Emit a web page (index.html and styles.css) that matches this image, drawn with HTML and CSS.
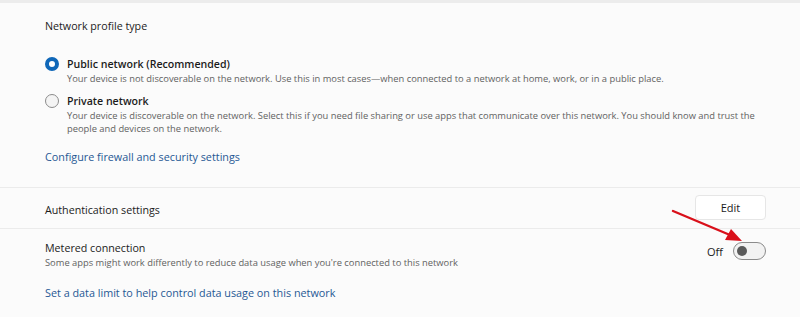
FILE: index.html
```html
<!DOCTYPE html>
<html>
<head>
<meta charset="utf-8" />
<title>Network properties</title>
<link rel="stylesheet" href="styles.css">
</head>
<body>

<div class="page">

	<div class="section profile">
		<div class="heading">Network profile type</div>

		<div class="option first">
			<span class="radio checked"></span>
			<div class="option-text">
				<div class="title">Public network (Recommended)</div>
				<div class="desc">Your device is not discoverable on the network. Use this in most cases—when connected to a network at home, work, or in a public place.</div>
			</div>
		</div>

		<div class="option">
			<span class="radio"></span>
			<div class="option-text">
				<div class="title">Private network</div>
				<div class="desc">Your device is discoverable on the network. Select this if you need file sharing or use apps that communicate over this network. You should know and trust the people and devices on the network.</div>
			</div>
		</div>

		<a class="link firewall" href="#">Configure firewall and security settings</a>
	</div>

	<div class="row auth">
		<div class="heading">Authentication settings</div>
		<button class="btn" type="button">Edit</button>
	</div>

	<div class="section metered">
		<div class="row-plain">
			<div>
				<div class="heading small">Metered connection</div>
				<div class="desc">Some apps might work differently to reduce data usage when you're connected to this network</div>
			</div>
			<div class="toggle-wrap">
				<span class="toggle-label">Off</span>
				<span class="toggle"><span class="knob"></span></span>
			</div>
		</div>
		<a class="link limit" href="#">Set a data limit to help control data usage on this network</a>
	</div>

	<svg class="arrow" width="90" height="50" viewBox="0 0 90 50">
		<line x1="3" y1="3" x2="60" y2="27" stroke="#d9101a" stroke-width="2.4" stroke-linecap="round" />
		<polygon points="72,33 55,32 61,21" fill="#d9101a" />
	</svg>

</div>

</body>
</html>
```

FILE: styles.css
```css
html, body {
	margin: 0;
	padding: 0;
}

body {
	background: #fbfbfb;
	font-family: "Open Sans", "Noto Sans", sans-serif;
	color: #1b1b1b;
}

.page {
	position: relative;
	border-top: 3px solid #ececec;
	height: 314px;
}

.section {
	padding: 0 34px 0 45px;
}

.profile {
	padding-top: 14px;
	padding-bottom: 21px;
	border-bottom: 1px solid #ebebeb;
}

.heading {
	font-size: 10.7px;
	line-height: 18px;
}

.heading.small {
	line-height: 16px;
}

.option {
	display: flex;
	gap: 8px;
	margin-top: 8px;
}

.option.first {
	margin-top: 21px;
}

.radio {
	box-sizing: border-box;
	width: 14px;
	height: 14px;
	margin-top: 1px;
	border-radius: 50%;
	border: 1px solid #8b8b8b;
	background: #f4f4f4;
	flex: none;
}

.radio.checked {
	border: 4px solid #0f67b8;
	background: #ffffff;
}

.title {
	font-size: 10.6px;
	font-weight: 600;
	line-height: 16px;
}

.desc {
	font-size: 9.35px;
	line-height: 13px;
	color: #626262;
}

.link {
	display: block;
	color: #1f5894;
	text-decoration: none;
	font-size: 10.8px;
	line-height: 18px;
}

.firewall {
	margin-top: 13px;
}

.row {
	display: flex;
	align-items: center;
	justify-content: space-between;
	height: 36px;
	padding: 4px 34px 0 45px;
	border-bottom: 1px solid #ebebeb;
}

.btn {
	width: 71px;
	height: 25px;
	margin-top: -5px;
	background: #ffffff;
	border: 1px solid #e6e6e6;
	border-radius: 4px;
	font-family: inherit;
	font-size: 11px;
	color: #1b1b1b;
}

.metered {
	padding-top: 11px;
}

.row-plain {
	display: flex;
	align-items: flex-start;
	justify-content: space-between;
}

.toggle-wrap {
	display: flex;
	align-items: center;
	gap: 10px;
	margin-top: 2px;
}

.toggle-label {
	font-size: 11px;
}

.toggle {
	box-sizing: border-box;
	display: flex;
	align-items: center;
	width: 33px;
	height: 18px;
	padding-left: 3px;
	border: 1px solid #8a8a8a;
	border-radius: 9px;
	background: #f2f2f2;
}

.knob {
	width: 10px;
	height: 10px;
	border-radius: 50%;
	background: #5a5a5a;
}

.limit {
	margin-top: 15px;
}

.arrow {
	position: absolute;
	left: 670px;
	top: 205px;
}
```
